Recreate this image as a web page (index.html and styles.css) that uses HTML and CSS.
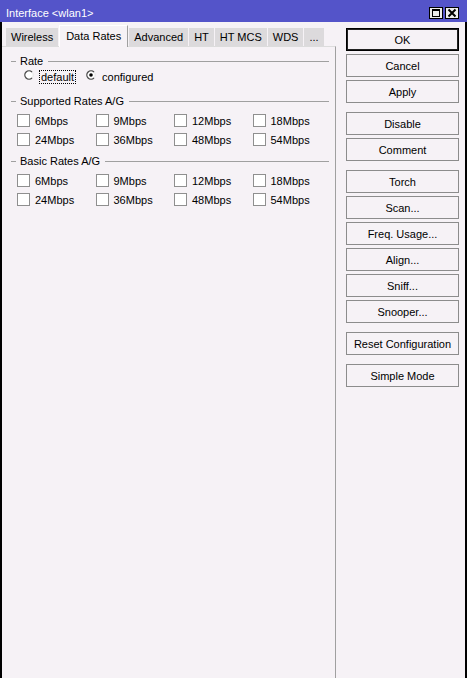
FILE: index.html
```html
<!DOCTYPE html>
<html lang="en">
<head>
    <meta charset="UTF-8">
    <title>Interface &lt;wlan1&gt;</title>
    <link rel="stylesheet" href="styles.css">
</head>
<body>
    <div class="window">
        <!-- Barra de título -->
        <div class="titlebar">
            <span class="title">Interface &lt;wlan1&gt;</span>
            <div class="title-buttons">
                <span class="tbtn">
                    <svg width="12" height="10" viewBox="0 0 12 10">
                        <rect x="2.5" y="1.5" width="7" height="7" fill="none" stroke="#000"/>
                        <line x1="2" y1="2.5" x2="10" y2="2.5" stroke="#000" stroke-width="1"/>
                    </svg>
                </span>
                <span class="tbtn">
                    <svg width="12" height="10" viewBox="0 0 12 10">
                        <path d="M2.5 1.5 L9.5 8.5 M9.5 1.5 L2.5 8.5" stroke="#000" stroke-width="2" fill="none"/>
                    </svg>
                </span>
            </div>
        </div>

        <div class="frame">
            <div class="left">
                <div class="tabs">
                    <div class="tab">Wireless</div>
                    <div class="tab active">Data Rates</div>
                    <div class="tab">Advanced</div>
                    <div class="tab">HT</div>
                    <div class="tab">HT MCS</div>
                    <div class="tab">WDS</div>
                    <div class="tab">...</div>
                </div>

                <div class="panel">
                    <div class="group-head">
                        <span class="dash"></span><span>Rate</span><span class="line"></span>
                    </div>
                    <div class="radios">
                        <svg class="radio" width="10" height="10" viewBox="0 0 10 10">
                            <circle cx="5" cy="5" r="4.2" fill="#fff" stroke="#e4e4e4"/>
                            <path d="M8 2 A4.2 4.2 0 1 0 8 8" fill="none" stroke="#4a4a4a" stroke-width="1.3"/>
                        </svg>
                        <span class="radio-label focus">default</span>
                        <svg class="radio checked" width="10" height="10" viewBox="0 0 10 10">
                            <circle cx="5" cy="5" r="4.2" fill="#fff" stroke="#e4e4e4"/>
                            <path d="M8 2 A4.2 4.2 0 1 0 8 8" fill="none" stroke="#4a4a4a" stroke-width="1.3"/>
                            <circle cx="5" cy="5" r="1.8" fill="#000"/>
                        </svg>
                        <span class="radio-label">configured</span>
                    </div>

                    <div class="group-head first">
                        <span class="dash"></span><span>Supported Rates A/G</span><span class="line"></span>
                    </div>
                    <div class="checks">
                        <label class="check"><span class="box"></span>6Mbps</label>
                        <label class="check"><span class="box"></span>9Mbps</label>
                        <label class="check"><span class="box"></span>12Mbps</label>
                        <label class="check"><span class="box"></span>18Mbps</label>
                        <label class="check"><span class="box"></span>24Mbps</label>
                        <label class="check"><span class="box"></span>36Mbps</label>
                        <label class="check"><span class="box"></span>48Mbps</label>
                        <label class="check"><span class="box"></span>54Mbps</label>
                    </div>

                    <div class="group-head">
                        <span class="dash"></span><span>Basic Rates A/G</span><span class="line"></span>
                    </div>
                    <div class="checks">
                        <label class="check"><span class="box"></span>6Mbps</label>
                        <label class="check"><span class="box"></span>9Mbps</label>
                        <label class="check"><span class="box"></span>12Mbps</label>
                        <label class="check"><span class="box"></span>18Mbps</label>
                        <label class="check"><span class="box"></span>24Mbps</label>
                        <label class="check"><span class="box"></span>36Mbps</label>
                        <label class="check"><span class="box"></span>48Mbps</label>
                        <label class="check"><span class="box"></span>54Mbps</label>
                    </div>
                </div>
            </div>

            <!-- Botões laterais -->
            <div class="right">
                <button class="btn default">OK</button>
                <button class="btn">Cancel</button>
                <button class="btn">Apply</button>

                <button class="btn sep">Disable</button>
                <button class="btn">Comment</button>

                <button class="btn sep">Torch</button>
                <button class="btn">Scan...</button>
                <button class="btn">Freq. Usage...</button>
                <button class="btn">Align...</button>
                <button class="btn">Sniff...</button>
                <button class="btn">Snooper...</button>

                <button class="btn sep">Reset Configuration</button>

                <button class="btn sep">Simple Mode</button>
            </div>
        </div>
    </div>
</body>
</html>
```

FILE: styles.css
```css
* {
    box-sizing: border-box;
}

body {
    margin: 0;
    font-family: "Liberation Sans", Arial, sans-serif;
    font-size: 11px;
    color: #000;
    background: #f6f2f6;
}

.window {
    width: 467px;
    height: 678px;
    display: flex;
    flex-direction: column;
    background: #f6f2f6;
    overflow: hidden;
}

/* barra de título */
.titlebar {
    flex: none;
    height: 22px;
    display: flex;
    align-items: center;
    padding: 4px 8px 0 6px;
    background: #5454c9;
    color: #fff;
}

.title {
    flex: 1;
}

.title-buttons {
    display: flex;
    gap: 2px;
}

.tbtn {
    width: 14px;
    height: 12px;
    border: 1px solid #000;
    background: #eeeeee;
    display: flex;
}

.frame {
    flex: 1;
    display: flex;
    border-left: 2px solid #000;
    border-right: 2px solid #000;
}

.left {
    width: 334px;
    display: flex;
    flex-direction: column;
}

/* abas */
.tabs {
    height: 24px;
    display: flex;
    align-items: flex-end;
    gap: 1px;
    padding-left: 4px;
    position: relative;
    z-index: 1;
}

.tab {
    height: 18px;
    line-height: 18px;
    padding: 0 5px;
    background: #dcdadc;
    white-space: nowrap;
}

.tab.active {
    height: 22px;
    line-height: 21px;
    margin-bottom: -1px;
    padding: 0 6px;
    background: #f6f2f6;
    border-left: 1px solid #fff;
    border-top: 1px solid #fff;
    border-right: 1px solid #a0a0a0;
}

.panel {
    flex: 1;
    border-top: 1px solid #dcdcdc;
    border-right: 1px solid #a0a0a0;
    padding: 7px 6px 0 9px;
}

/* cabeçalho de grupo */
.group-head {
    height: 14px;
    display: flex;
    align-items: center;
    margin-top: 5px;
}

.group-head:first-child {
    margin-top: 0;
}

.group-head.first {
    margin-top: 10px;
}

.group-head .dash {
    width: 5px;
    height: 1px;
    background: #a0a0a0;
    margin-right: 4px;
}

.group-head .line {
    flex: 1;
    height: 1px;
    background: #a0a0a0;
    margin-left: 5px;
}

/* botões de rádio */
.radios {
    height: 15px;
    margin-top: 1px;
    display: flex;
    align-items: center;
    padding-left: 13px;
}

.radio {
    flex: none;
    margin-bottom: 3px;
}

.radio.checked {
    margin-left: 10px;
}

.radio-label {
    margin-left: 6px;
    line-height: 12px;
}

.radio-label.focus {
    margin-left: 5px;
    border: 1px dotted #000;
    padding: 0 1px;
}

/* caixas de seleção */
.checks {
    display: grid;
    grid-template-columns: repeat(4, 78.5px);
    margin: 3px 0 0 6px;
}

.check {
    height: 19px;
    display: flex;
    align-items: center;
}

.check .box {
    width: 13px;
    height: 13px;
    border: 1px solid #8f8f8f;
    background: #fff;
    margin-right: 5px;
}

/* coluna de botões */
.right {
    flex: 1;
    display: flex;
    flex-direction: column;
    gap: 3px;
    padding: 6px 6px 0 10px;
}

.btn {
    height: 23px;
    padding: 0;
    border: 1px solid #8c8c8c;
    background: #f6f2f6;
    color: #000;
    font: inherit;
}

.btn.default {
    border-color: #000;
    box-shadow: inset 0 0 0 1px #222;
}

.btn.sep {
    margin-top: 6px;
}
```
